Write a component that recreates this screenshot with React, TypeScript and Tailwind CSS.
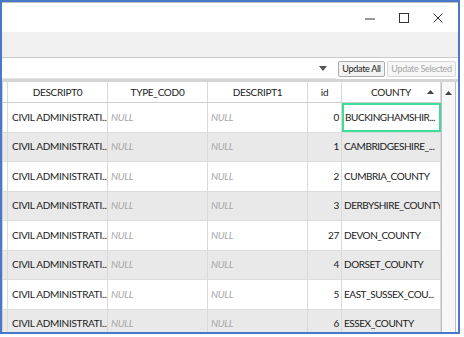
const rows = [
    { id: '0', county: 'BUCKINGHAMSHIR...', selected: true },
    { id: '1', county: 'CAMBRIDGESHIRE_...' },
    { id: '2', county: 'CUMBRIA_COUNTY' },
    { id: '3', county: 'DERBYSHIRE_COUNTY' },
    { id: '27', county: 'DEVON_COUNTY' },
    { id: '4', county: 'DORSET_COUNTY' },
    { id: '5', county: 'EAST_SUSSEX_COU...' },
    { id: '6', county: 'ESSEX_COUNTY' },
];

const base = 'h-full flex items-center shrink-0 overflow-hidden whitespace-nowrap';
const cell = `${base} border-r border-[#d9d9d9]`;

export default function App() {
    return (
        <div className="w-[464px] h-[337px] bg-white font-['Lato',sans-serif] text-[10px] tracking-[-0.3px] text-[#1a1a1a]">
            <div className="w-[460px] h-[334px] border-2 border-[#4a78c8] flex flex-col overflow-hidden">
                {/* title bar */}
                <div className="h-[30px] shrink-0 border-t border-[#bdbdbd] bg-white flex items-center justify-end pr-[14px] gap-[22px] text-[#333]">
                    <svg width="12" height="12" viewBox="0 0 12 12"><path d="M1 7h10" stroke="#333" strokeWidth="1" /></svg>
                    <svg width="12" height="12" viewBox="0 0 12 12"><rect x="1.5" y="1.5" width="9" height="9" fill="none" stroke="#333" strokeWidth="1" /></svg>
                    <svg width="12" height="12" viewBox="0 0 12 12"><path d="M1.5 1.5l9 9M10.5 1.5l-9 9" stroke="#333" strokeWidth="1" /></svg>
                </div>
                {/* toolbar band */}
                <div className="h-[26px] shrink-0 bg-[#f0f0f0] border-b border-[#c9c9c9]" />
                {/* combobox row */}
                <div className="h-[21px] shrink-0 flex items-center bg-white">
                    <div className="w-[334px] h-full border-b border-[#e4e4e4] flex items-center justify-end pr-[9px]">
                        <svg width="8" height="5" viewBox="0 0 8 5"><path d="M0 0h8L4 5z" fill="#555" /></svg>
                    </div>
                    <div className="ml-[2px] w-[47px] h-[16px] border border-[#adadad] rounded-[2px] bg-[#f3f3f3] flex items-center justify-center text-[9px] leading-none whitespace-nowrap">Update All</div>
                    <div className="ml-[2px] w-[69px] h-[16px] border border-[#d6d6d6] rounded-[2px] bg-[#f6f6f6] flex items-center justify-center text-[9px] leading-none whitespace-nowrap text-[#a6a6a6]">Update Selected</div>
                </div>
                <div className="h-[3px] shrink-0 bg-[#d4d4d4]" />
                {/* table */}
                <div className="flex-1 flex min-h-0 border-l border-[#cfcfcf] bg-white">
                    <div className="flex flex-col w-[438px] shrink-0">
                        <div className="h-[21px] shrink-0 flex border-b border-[#cfcfcf] bg-white">
                            <div className={`${cell} w-[5px]`} />
                            <div className={`${cell} w-[100px] justify-center`}>DESCRIPT0</div>
                            <div className={`${cell} w-[100px] justify-center`}>TYPE_COD0</div>
                            <div className={`${cell} w-[100px] justify-center`}>DESCRIPT1</div>
                            <div className={`${cell} w-[34px] justify-center`}>id</div>
                            <div className={`${cell} w-[99px] justify-center relative`}>
                                COUNTY
                                <svg className="absolute right-[6px] top-[8px]" width="7" height="4" viewBox="0 0 7 4"><path d="M0 4h7L3.5 0z" fill="#444" /></svg>
                            </div>
                        </div>
                        {rows.map((r, i) => (
                            <div key={r.id} className={`h-[29.5px] shrink-0 flex border-b border-[#dcdcdc] ${i % 2 ? 'bg-[#e9e9e9]' : 'bg-white'}`}>
                                <div className={`${cell} w-[5px]`} />
                                <div className={`${cell} w-[100px] pl-[4px]`}>CIVIL ADMINISTRATI...</div>
                                <div className={`${cell} w-[100px] pl-[3px] italic text-[#a8a8a8]`}>NULL</div>
                                <div className={`${cell} w-[100px] pl-[3px] italic text-[#a8a8a8]`}>NULL</div>
                                <div className={`${cell} w-[34px] justify-end pr-[2px]`}>{r.id}</div>
                                {r.selected ? (
                                    <div className={`${base} w-[99px] pl-[1px] tracking-[-0.45px] border-2 border-[#3fdc9a] bg-white`}>{r.county}</div>
                                ) : (
                                    <div className={`${cell} w-[99px] pl-[2px] tracking-[-0.45px]`}>{r.county}</div>
                                )}
                            </div>
                        ))}
                    </div>
                    {/* scrollbar */}
                    <div className="w-[15px] shrink-0 bg-[#f7f7f7] border-l border-r border-[#bfbfbf] flex flex-col items-center">
                        <div className="h-[21px] flex items-center">
                            <svg width="7" height="4" viewBox="0 0 7 4"><path d="M0 4h7L3.5 0z" fill="#444" /></svg>
                        </div>
                    </div>
                </div>
            </div>
        </div>
    );
}
